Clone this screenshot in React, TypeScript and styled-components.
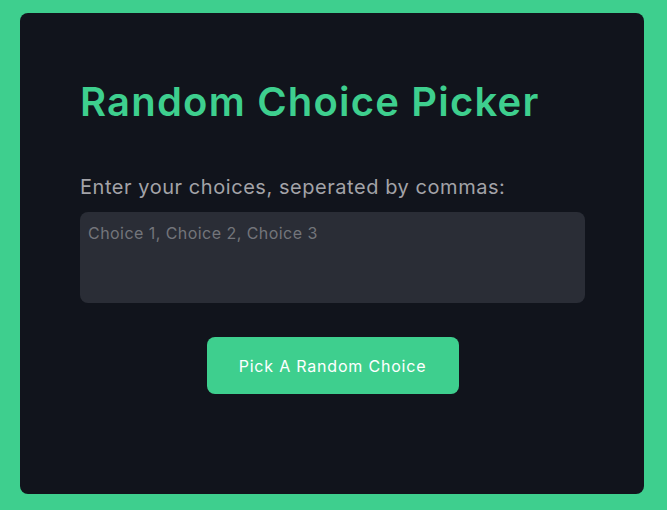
import React from "react";
import styled, { createGlobalStyle } from "styled-components";

const Global = createGlobalStyle`
  html, body {
    margin: 0;
    padding: 0;
    background: #3ecf8e;
    font-family: Inter, "Noto Sans", sans-serif;
  }
  * { box-sizing: border-box; }
`;

const Page = styled.div`
  display: flex;
  padding: 13px 23px 16px 20px;
  min-height: 510px;
`;

const Card = styled.main`
  flex: 1;
  background: #11141c;
  border-radius: 8px;
  padding: 65px 59px 100px 60px;
  display: flex;
  flex-direction: column;
`;

const Title = styled.h1`
  margin: 0 0 46px;
  color: #3ecf8e;
  font-size: 40px;
  line-height: 48px;
  font-weight: 600;
  letter-spacing: 1.2px;
`;

const Label = styled.label`
  display: block;
  margin: 0 0 10px;
  color: #a3a3a8;
  font-size: 20px;
  line-height: 30px;
  font-weight: 400;
  letter-spacing: 0.55px;
`;

const Input = styled.textarea`
  display: block;
  width: 100%;
  height: 91px;
  border: none;
  outline: none;
  resize: none;
  border-radius: 8px;
  background: #2a2d36;
  color: #e5e7eb;
  font-family: inherit;
  font-size: 16px;
  line-height: 24px;
  letter-spacing: 0.45px;
  padding: 9px 8px 8px;
  &::placeholder {
    color: #73757b;
  }
`;

const Actions = styled.div`
  display: flex;
  justify-content: center;
  margin-top: 34px;
`;

const Button = styled.button`
  width: 252px;
  height: 57px;
  border: none;
  border-radius: 8px;
  background: #3ecf8e;
  color: #ffffff;
  font-family: inherit;
  font-size: 16px;
  line-height: 24px;
  font-weight: 400;
  letter-spacing: 0.8px;
  cursor: pointer;
`;

export default function App() {
  return (
    <>
      <Global />
      <Page>
        <Card>
          <Title>Random Choice Picker</Title>
          <Label htmlFor="choices">Enter your choices, seperated by commas:</Label>
          <Input id="choices" placeholder="Choice 1, Choice 2, Choice 3" />
          <Actions>
            <Button>Pick A Random Choice</Button>
          </Actions>
        </Card>
      </Page>
    </>
  );
}
